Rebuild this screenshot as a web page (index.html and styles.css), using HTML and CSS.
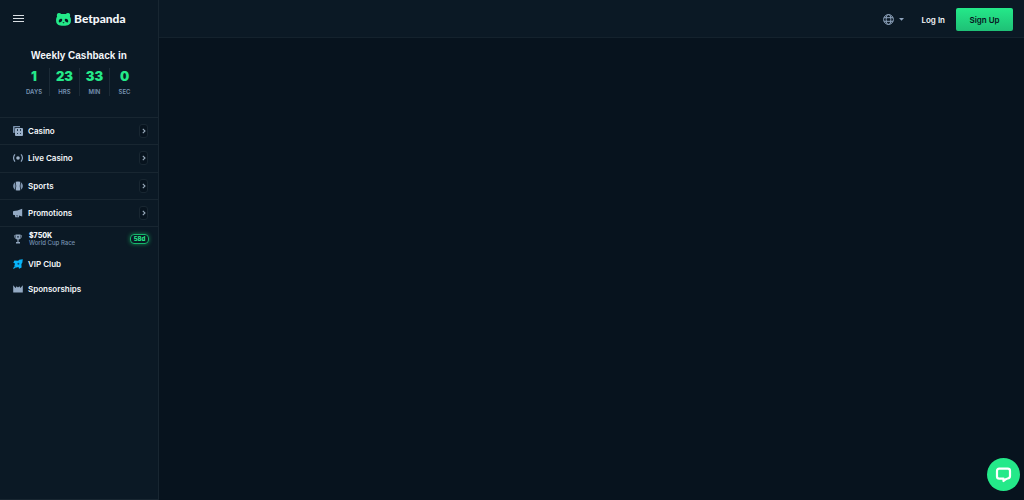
FILE: index.html
```html
<!DOCTYPE html>
<html lang="en">
<head>
<meta charset="utf-8">
<title>Betpanda</title>
<link rel="stylesheet" href="styles.css">
</head>
<body>
<div class="app">
  <aside class="sidebar">
    <div class="brand-bar">
      <button class="menu-button" type="button" aria-label="Menu">
        <svg width="11" height="8" viewBox="0 0 11 8"><path d="M0 .5h11M0 3.5h11M0 6.5h11" stroke="#d9dee3"/></svg>
      </button>
      <a class="brand" href="#">
        <svg width="15" height="13" viewBox="0 0 15 13"><path d="M3 0C1 0 .4 2 1.1 3.4C.3 4.5 0 6 .1 8C.2 11.4 3 12.8 7.5 12.8S14.8 11.4 14.9 8C15 6 14.7 4.5 13.9 3.4C14.6 2 14 0 12 0C11 0 10.3.4 9.9 1H5.1C4.7.4 4 0 3 0Z" fill="#24e989"/><path d="M2.8 8.8C2.4 7.2 3.6 5.7 5.2 5.8C6.6 5.9 6.5 7.2 5.7 8.3C4.9 9.4 3.2 10 2.8 8.8ZM12.2 8.8C12.6 7.2 11.4 5.7 9.8 5.8C8.4 5.9 8.5 7.2 9.3 8.3C10.1 9.4 11.8 10 12.2 8.8ZM6.4 9.2h2.2L7.5 10.5Z" fill="#0b1925"/></svg>
        <span>Betpanda</span>
      </a>
    </div>
    <section class="cashback">
      <h2 class="cashback-title">Weekly Cashback in</h2>
      <div class="countdown">
        <div class="unit"><strong>1</strong><span>DAYS</span></div>
        <div class="unit"><strong>23</strong><span>HRS</span></div>
        <div class="unit"><strong>33</strong><span>MIN</span></div>
        <div class="unit"><strong>0</strong><span>SEC</span></div>
      </div>
    </section>
    <nav>
      <div class="groups">
        <div class="group">
          <a class="item" href="#"><svg class="icon" viewBox="0 0 10 10"><path d="M.8 0H7V1.2H1.6V7H.8Q0 7 0 6.2V.8Q0 0 .8 0Z" fill="#7890ac"/><rect x="2" y="2" width="8" height="8" rx="1" fill="#9bb0c9"/><path d="M4 3h1v2H4zM7 3h1v2H7zM4 7h1v1H4zM7 7h1v1H7z" fill="#243b50"/></svg>Casino</a>
          <button class="expand" type="button" aria-label="Expand Casino"><svg width="4" height="6" viewBox="0 0 4 6"><path d="M.8 .8L3 3L.8 5.2" fill="none" stroke="#9aacbd" stroke-width="1.1"/></svg></button>
        </div>
        <div class="group">
          <a class="item" href="#"><svg class="icon" viewBox="0 0 10 10"><circle cx="5" cy="5" r="1.8" fill="#a1b4ca"/><path d="M2 1.4Q-.9 5 2 8.6M8 1.4Q10.9 5 8 8.6" fill="none" stroke="#8fa5bf" stroke-width="1.2"/></svg>Live Casino</a>
          <button class="expand" type="button" aria-label="Expand Live Casino"><svg width="4" height="6" viewBox="0 0 4 6"><path d="M.8 .8L3 3L.8 5.2" fill="none" stroke="#9aacbd" stroke-width="1.1"/></svg></button>
        </div>
        <div class="group">
          <a class="item" href="#"><svg class="icon" viewBox="0 0 10 10"><path d="M2.7.8Q5 0 7.3.8Q6.2 5 7.3 9.2Q5 10 2.7 9.2Q3.8 5 2.7.8Z" fill="#9bb0c9"/><path d="M2 1.2Q3.2 5 2 8.8Q.1 7.4.1 5T2 1.2ZM8 1.2Q6.8 5 8 8.8Q9.9 7.4 9.9 5T8 1.2Z" fill="#8298b2"/></svg>Sports</a>
          <button class="expand" type="button" aria-label="Expand Sports"><svg width="4" height="6" viewBox="0 0 4 6"><path d="M.8 .8L3 3L.8 5.2" fill="none" stroke="#9aacbd" stroke-width="1.1"/></svg></button>
        </div>
        <div class="group">
          <a class="item" href="#"><svg class="icon" viewBox="0 0 10 10"><path d="M9.2.8V8.4L6 7.6V9.2H2.3L1.8 7H.8Q0 7 0 6.2V4Q0 3.2.8 3L4.5 2.4Z" fill="#93a9c3"/><path d="M3.3 7.3L5 7.7V8.3H3.6Z" fill="#0b1925"/></svg>Promotions</a>
          <button class="expand" type="button" aria-label="Expand Promotions"><svg width="4" height="6" viewBox="0 0 4 6"><path d="M.8 .8L3 3L.8 5.2" fill="none" stroke="#9aacbd" stroke-width="1.1"/></svg></button>
        </div>
      </div>
      <div class="links">
        <a class="race" href="#">
          <svg class="icon" viewBox="0 0 10 10"><path d="M2.5 .5H7.5V3Q7.5 5.8 5 5.8T2.5 3Z" fill="#90a5bd"/><path d="M2.6 1.5H1.4Q1.4 4.3 3 4.5M7.4 1.5H8.6Q8.6 4.3 7 4.5" fill="none" stroke="#8094aa" stroke-width=".8"/><path d="M4.4 5.5H5.6V8H7V9.4H3V8H4.4Z" fill="#90a5bd"/><circle cx="5" cy="2.8" r=".9" fill="#1d3144"/></svg>
          <span class="race-text"><strong>$750K</strong><small>World Cup Race</small></span>
          <span class="badge">58d</span>
        </a>
        <a class="item" href="#"><svg class="icon" viewBox="0 0 10 10"><path d="M9.8 .2L6.2.8L5.2 1.7L1.4 1.4L.3 3.8L2 4.4L1.5 6.5L0 9.9L3.5 8.5L5.5 8L6 9.8L8.6 8.6L8.4 5L9.3 3.8Z" fill="#08b4fa"/><circle cx="5.4" cy="4.8" r="1" fill="#0d4b78"/><path d="M1.4 7.2L2.8 8.6" stroke="#0b1925" stroke-width=".6"/></svg>VIP Club</a>
        <a class="item" href="#"><svg class="icon" viewBox="0 0 10 10"><path d="M.2 1.3L2.6 4L3.6 2.2L5 3.6L6.4 2.2L7.4 4L9.8 1.3V8.6H.2Z" fill="#93a9c3"/></svg>Sponsorships</a>
      </div>
    </nav>
  </aside>
  <div class="page">
    <header class="topbar">
      <button class="language" type="button" aria-label="Language">
        <svg width="11" height="11" viewBox="0 0 11 11"><g fill="none" stroke="#8fa4bd"><circle cx="5.5" cy="5.5" r="4.9"/><ellipse cx="5.5" cy="5.5" rx="2.3" ry="4.9"/><path d="M1 3.7H10M1 7.3H10"/></g></svg>
        <svg width="5" height="3" viewBox="0 0 5 3"><path d="M0 0H5L2.5 2.8Z" fill="#8fa4bd"/></svg>
      </button>
      <a class="login" href="#">Log In</a>
      <button class="signup" type="button">Sign Up</button>
    </header>
    <main class="content"></main>
  </div>
</div>
<button class="chat" type="button" aria-label="Open chat">
  <svg width="17" height="16" viewBox="0 0 17 16"><path d="M4.2 1.7H12.8Q15 1.7 15 3.9V9Q15 11.2 12.6 11.5Q11 11.7 8.5 14V11.6H4.2Q2 11.6 2 9.4V3.9Q2 1.7 4.2 1.7Z" fill="none" stroke="#fff" stroke-width="2.2" stroke-linejoin="round"/></svg>
</button>
</body>
</html>
```
FILE: styles.css
```css
* { box-sizing: border-box; }
body {
  margin: 0;
  background: #07131e;
  color: #f4f7fa;
  font-family: Inter, "Liberation Sans", sans-serif;
  font-size: 8px;
  line-height: 10px;
}
button { padding: 0; border: 0; background: none; color: inherit; font: inherit; cursor: pointer; }
a { color: inherit; text-decoration: none; }
svg { display: block; flex: none; }
.app { display: flex; min-height: 100vh; }
.sidebar {
  flex: none;
  width: 159px;
  background: #0b1925;
  border-right: 1px solid #182631;
  border-bottom: 1px solid #182631;
}
.brand-bar { display: flex; align-items: center; height: 38px; padding-left: 13px; }
.brand {
  display: flex;
  align-items: center;
  gap: 3px;
  margin-left: 32px;
  font: 900 12px/16px Lato, sans-serif;
}
.cashback { height: 79px; padding-top: 12px; text-align: center; }
.cashback-title { margin: 0; font: 700 10px/12px "Liberation Sans", sans-serif; }
.countdown { display: flex; justify-content: center; margin-top: 6px; }
.unit { width: 30px; padding-top: 1px; }
.unit + .unit { border-left: 1px solid #1b2a36; }
.unit strong { display: block; color: #24e989; font-size: 13px; line-height: 15px; font-weight: 900; }
.unit span { display: block; margin-top: 4px; color: #7793b3; font-size: 6px; line-height: 8px; font-weight: 600; }
.groups { display: flex; flex-direction: column; height: 110px; border-bottom: 1px solid #182631; }
.group {
  display: flex;
  flex: 1;
  align-items: center;
  justify-content: space-between;
  padding-right: 10px;
  border-top: 1px solid #182631;
}
.item { display: flex; align-items: center; gap: 5px; padding-left: 13px; font-weight: 600; }
.icon { width: 10px; height: 10px; }
.expand {
  display: flex;
  align-items: center;
  justify-content: center;
  width: 9px;
  height: 14px;
  border: 1px solid #182631;
  border-radius: 3px;
  background: #07131e;
}
.links { display: flex; flex-direction: column; }
.links .item { height: 25px; }
.race { display: flex; align-items: center; height: 24px; padding: 0 9px 0 13px; gap: 6px; }
.race-text { flex: 1; }
.race-text strong { display: block; font-size: 7px; line-height: 7px; font-weight: 800; }
.race-text small { display: block; color: #7793b3; font-size: 6px; line-height: 7px; font-weight: 500; white-space: nowrap; }
.badge {
  width: 19px;
  border: 1px solid #16b76c;
  border-radius: 4px;
  box-shadow: 0 0 4px #14874f;
  color: #24e989;
  font-size: 6px;
  line-height: 8px;
  font-weight: 800;
  text-align: center;
}
.page { display: flex; flex: 1; flex-direction: column; }
.topbar {
  display: flex;
  align-items: center;
  justify-content: flex-end;
  height: 38px;
  padding: 2px 11px 0 0;
  border-bottom: 1px solid #14222d;
  background: #0b1925;
}
.language { display: flex; align-items: center; gap: 5px; margin-right: 17px; }
.login { margin-right: 11px; font-weight: 600; }
.signup {
  width: 57px;
  height: 23px;
  border-radius: 2px;
  background: linear-gradient(#24e989, #1fc076);
  color: #07131e;
  font-weight: 600;
}
.content { flex: 1; }
.chat {
  position: fixed;
  right: 4px;
  bottom: 9px;
  display: flex;
  align-items: center;
  justify-content: center;
  width: 33px;
  height: 33px;
  border-radius: 50%;
  background: #24e989;
}
```
